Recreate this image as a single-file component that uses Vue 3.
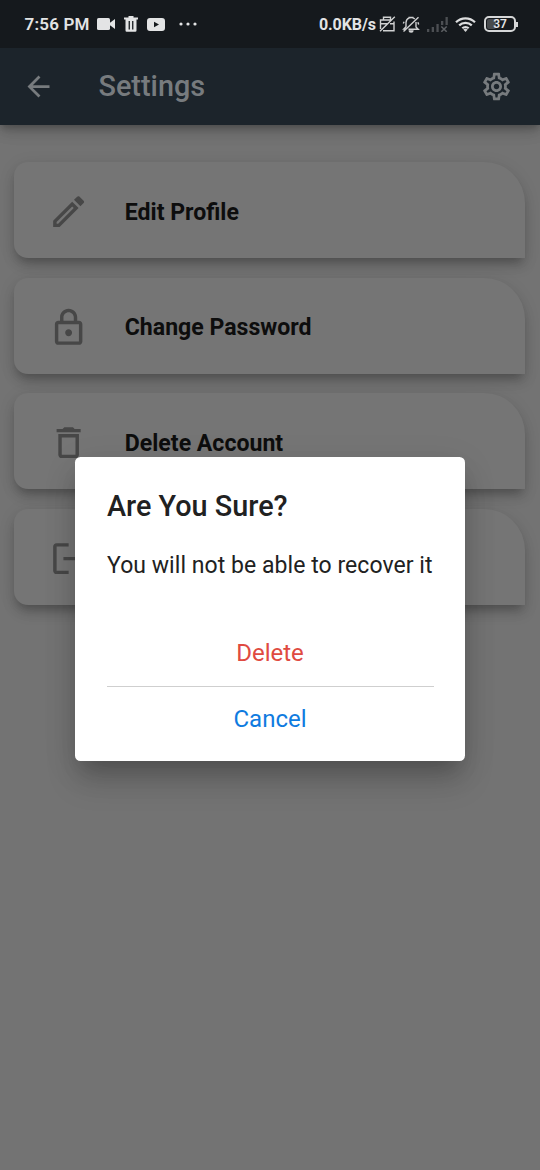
<script setup>
const items = [
  {
    label: 'Edit Profile',
    path: 'M14.06 9.02l.92.92L5.92 19H5v-.92l9.06-9.06M17.66 3c-.25 0-.51.1-.7.29l-1.83 1.83 3.75 3.75 1.83-1.83c.39-.39.39-1.02 0-1.41l-2.34-2.34c-.2-.2-.45-.29-.71-.29zm-3.6 3.19L3 17.25V21h3.75L17.81 9.94l-3.75-3.75z',
  },
  {
    label: 'Change Password',
    path: 'M18 8h-1V6c0-2.76-2.24-5-5-5S7 3.24 7 6v2H6c-1.1 0-2 .9-2 2v10c0 1.1.9 2 2 2h12c1.1 0 2-.9 2-2V10c0-1.1-.9-2-2-2zM9 6c0-1.66 1.34-3 3-3s3 1.34 3 3v2H9V6zm9 14H6V10h12v10zm-6-3c1.1 0 2-.9 2-2s-.9-2-2-2-2 .9-2 2 .9 2 2 2z',
  },
  {
    label: 'Delete Account',
    path: 'M6 19c0 1.1.9 2 2 2h8c1.1 0 2-.9 2-2V7H6v12zM8 9h8v10H8V9zm7.5-5l-1-1h-5l-1 1H5v2h14V4h-3.5z',
  },
  {
    label: 'Logout',
    path: 'M5 5h7V3H5c-1.1 0-2 .9-2 2v14c0 1.1.9 2 2 2h7v-2H5V5zm16 7l-4-4v3H9v2h8v3l4-4z',
  },
]
</script>

<template>
  <div class="screen">
    <div class="status">
      <span class="clock">7:56 PM</span>
      <svg class="s-cam" viewBox="0 0 18 12"><rect width="13" height="12" rx="1.6" /><path d="M12 5.5L18 1v10l-6-4.500z" /></svg>
      <svg class="s-bin" viewBox="0 0 14 16"><path fill-rule="evenodd" d="M4.500 0h5v1.500H14v2h-1.500V14.500a1.200 1.200 0 0 1-1.200 1.200H2.700a1.200 1.200 0 0 1-1.200-1.200V3.500H0v-2h4.500zM4.600 5v8.500h1.300V5zM8.100 5v8.500h1.300V5z" /></svg>
      <svg class="s-tube" viewBox="0 0 18 13"><path fill-rule="evenodd" d="M3 0h12a3 3 0 0 1 3 3v7a3 3 0 0 1-3 3H3a3 3 0 0 1-3-3V3a3 3 0 0 1 3-3zM7 3.700v5.600l5-2.800z" /></svg>
      <svg class="s-dots" viewBox="0 0 18 4"><circle cx="2" cy="2" r="1.600" /><circle cx="9" cy="2" r="1.600" /><circle cx="16" cy="2" r="1.600" /></svg>
      <span class="gap"></span>
      <span class="rate">0.0KB/s</span>
      <svg class="s-card line" viewBox="0 0 17 16"><path d="M4.500 4V1.200h7V4M1.500 13V4h11.500M4 14.700h11V5.500M1.500 7.800h7M11 7.800h4M1 15.200L15.800.8" /></svg>
      <svg class="s-bell line" viewBox="0 0 18 17"><path d="M12.800 3A5.200 5.200 0 0 0 4 6.500v4.300L1.800 13H4M14 6v5l2.200 2.200H6.500M1.500 15.500L16.500 1.300M1.300 7.500l.8-1.800M16.700 8.500l-.8-2.300M6.500 1.400h5" /><path d="M6.600 14.200a2.500 2.500 0 0 0 5 0z" class="solid" /></svg>
      <svg class="s-signal" viewBox="0 0 21 15"><path d="M0 12h2.300v3H0zM4.700 10H7v5H4.700zM9.400 7h2.300v8H9.400zM14 4h2.300v4H14zM18.500 0h2.300v8h-2.300z" /><path d="M14.300 9.500l5.400 5.300M19.700 9.500l-5.400 5.300" class="cross" /></svg>
      <svg class="s-wifi" viewBox="0 0 21 15"><path d="M1 5.300a13.500 13.500 0 0 1 19 0M4.200 8.400a9 9 0 0 1 12.600 0M7.300 11.300a4.600 4.600 0 0 1 6.400 0" /><path d="M8.300 12.500L10.500 15l2.200-2.500a3.200 3.200 0 0 0-4.400 0z" class="solid" /></svg>
      <span class="battery"><span class="level"></span><span class="percent">37</span></span>
      <span class="nub"></span>
    </div>

    <header class="bar">
      <svg class="back" viewBox="0 0 24 24"><path d="M20 11H7.830l5.590-5.590L12 4l-8 8 8 8 1.410-1.410L7.830 13H20v-2z" /></svg>
      <h1>Settings</h1>
      <svg class="gear" viewBox="0 0 24 24"><path d="M19.430 12.980c.04-.32.07-.64.07-.98 0-.34-.03-.66-.07-.98l2.110-1.650c.19-.15.24-.42.12-.64l-2-3.460c-.09-.16-.26-.25-.44-.25-.06 0-.12.01-.17.03l-2.490 1c-.52-.4-1.080-.73-1.690-.98l-.38-2.650C14.460 2.180 14.250 2 14 2h-4c-.25 0-.46.18-.49.42l-.38 2.650c-.61.25-1.170.59-1.690.98l-2.490-1c-.06-.02-.12-.03-.18-.03-.17 0-.34.09-.43.25l-2 3.460c-.13.22-.07.49.12.64l2.110 1.650c-.04.32-.07.65-.07.98 0 .33.03.66.07.98l-2.110 1.650c-.19.15-.24.42-.12.64l2 3.460c.09.16.26.25.44.25.06 0 .12-.01.17-.03l2.490-1c.52.4 1.080.73 1.690.98l.38 2.650c.03.24.24.42.49.42h4c.25 0 .46-.18.49-.42l.38-2.650c.61-.25 1.170-.59 1.690-.98l2.490 1c.06.02.12.03.18.03.17 0 .34-.09.43-.25l2-3.460c.12-.22.07-.49-.12-.64l-2.110-1.650zm-1.980-1.710c.04.31.05.52.05.73 0 .21-.02.43-.05.73l-.14 1.130.89.7 1.080.84-.7 1.210-1.270-.51-1.040-.42-.9.68c-.43.32-.84.56-1.250.73l-1.060.43-.16 1.130-.2 1.350h-1.400l-.19-1.350-.16-1.130-1.060-.43c-.43-.18-.83-.41-1.230-.71l-.91-.7-1.060.43-1.270.51-.7-1.210 1.080-.84.89-.7-.14-1.130c-.03-.31-.05-.54-.05-.74s.02-.43.05-.73l.14-1.130-.89-.7-1.080-.84.7-1.210 1.270.51 1.040.42.9-.68c.43-.32.84-.56 1.250-.73l1.060-.43.16-1.130.2-1.350h1.390l.19 1.350.16 1.130 1.060.43c.43.18.83.41 1.230.71l.91.7 1.060-.43 1.270-.51.7 1.210-1.070.85-.89.7.14 1.130zM12 8c-2.210 0-4 1.790-4 4s1.790 4 4 4 4-1.790 4-4-1.790-4-4-4zm0 6c-1.100 0-2-.9-2-2s.9-2 2-2 2 .9 2 2-.9 2-2 2z" /></svg>
    </header>

    <main class="list">
      <div v-for="item in items" :key="item.label" class="card">
        <svg viewBox="0 0 24 24"><path :d="item.path" /></svg>
        <span v-if="item.label !== 'Logout'">{{ item.label }}</span>
      </div>
    </main>

    <div class="dialog">
      <h2>Are You Sure?</h2>
      <p>You will not be able to recover it</p>
      <div class="action delete">Delete</div>
      <div class="action cancel">Cancel</div>
    </div>
  </div>
</template>

<style>
body {
  margin: 0;
  background: #737373;
}
</style>

<style scoped>
.screen {
  position: relative;
  width: 540px;
  height: 1170px;
  overflow: hidden;
  background: #737373;
  font-family: Roboto, sans-serif;
}
svg {
  display: block;
  flex: none;
}
.status {
  box-sizing: border-box;
  display: flex;
  align-items: center;
  height: 48px;
  padding: 0 23px 0 24.500px;
  background: #15191d;
  color: #e3e4e5;
  fill: #e3e4e5;
  position: relative;
  z-index: 2;
}
.clock {
  width: 72.500px;
  font-size: 17px;
  font-weight: 600;
  letter-spacing: 0.2px;
  white-space: nowrap;
}
.s-cam { width: 18px; height: 12px; }
.s-bin { width: 14px; height: 16px; margin-left: 9px; }
.s-tube { width: 18px; height: 13px; margin-left: 9px; }
.s-dots { width: 18px; height: 4px; margin-left: 14px; }
.gap { flex: 1; }
.rate {
  width: 57px;
  font-size: 16px;
  font-weight: 700;
  letter-spacing: -0.1px;
  white-space: nowrap;
}
.line {
  fill: none;
  stroke: #d0d1d2;
  stroke-width: 1.4;
}
.solid { fill: #d0d1d2; stroke: none; }
.s-card { width: 17px; height: 16px; margin-left: 3px; }
.s-bell { width: 18px; height: 17px; margin-left: 6px; }
.s-signal { width: 21px; height: 15px; margin-left: 7px; fill: #4c4f53; }
.cross { stroke: #5c5f63; stroke-width: 1.5; }
.s-wifi {
  width: 21px;
  height: 15px;
  margin-left: 7px;
  overflow: visible;
  fill: none;
  stroke: #dddedf;
  stroke-width: 2.2;
}
.battery {
  box-sizing: border-box;
  display: flex;
  position: relative;
  width: 32px;
  height: 16px;
  margin-left: 8px;
  padding: 1px;
  border: 2px solid #d6d7d8;
  border-radius: 5px;
}
.level {
  width: 9px;
  border-radius: 2px;
  background: #484b4e;
}
.percent {
  position: absolute;
  inset: 0;
  font-size: 12px;
  font-weight: 600;
  line-height: 12.500px;
  text-align: center;
}
.nub {
  width: 2px;
  height: 5px;
  margin-right: -1px;
  background: #d6d7d8;
}
.bar {
  box-sizing: border-box;
  display: flex;
  align-items: center;
  position: relative;
  z-index: 1;
  height: 77px;
  padding: 0 27px 0 21.500px;
  background: #1c242b;
  fill: #777b7e;
  color: #777b7e;
  box-shadow: 0 5px 6px -2px rgba(0, 0, 0, 0.18), 0 6px 14px rgba(0, 0, 0, 0.14), 0 2px 20px rgba(0, 0, 0, 0.1);
}
.back, .gear { width: 33px; height: 33px; margin-top: -1px; }
h1 {
  flex: 1;
  margin: 0 0 0 44px;
  font-size: 28.800px;
  font-weight: 500;
  line-height: 33px;
}
.list {
  display: flex;
  flex-direction: column;
  gap: 19.500px;
  padding: 37px 15px 0 14px;
}
.card {
  display: flex;
  align-items: center;
  gap: 36px;
  box-sizing: border-box;
  height: 96px;
  padding: 3px 0 0 33.500px;
  border-radius: 14px 41px 0 14px;
  background: #757575;
  fill: #474747;
  color: #0d0d0d;
  font-size: 23.100px;
  font-weight: 700;
  box-shadow: 0 7px 8px -4px rgba(0, 0, 0, 0.18), 0 9px 14px -1px rgba(0, 0, 0, 0.13), 0 3px 17px rgba(0, 0, 0, 0.09);
}
.card span { padding-top: 1px; }
.card svg { width: 41.250px; height: 41.250px; margin-top: 1px; }
.dialog {
  position: absolute;
  z-index: 3;
  left: 75px;
  top: 457px;
  box-sizing: border-box;
  width: 390px;
  height: 304px;
  padding: 33px 31px 0 32px;
  border-radius: 5.500px;
  background: #fff;
  color: #212121;
  box-shadow: 0 15px 20px -8px rgba(0, 0, 0, 0.18), 0 22px 32px 0 rgba(0, 0, 0, 0.12), 0 8px 36px 0 rgba(0, 0, 0, 0.09);
}
h2 {
  margin: 0;
  font-size: 28.800px;
  font-weight: 500;
  line-height: 33px;
}
p {
  margin: 27px 0 40px;
  font-size: 23px;
  letter-spacing: 0.050px;
  line-height: 31px;
  white-space: nowrap;
}
.action {
  height: 65px;
  font-size: 24px;
  line-height: 65px;
  text-align: center;
  text-indent: -1px;
}
.delete { color: #e04a41; }
.cancel {
  line-height: 64px;
  color: #0f7be0;
  border-top: 1px solid #cfcfcf;
}
</style>
